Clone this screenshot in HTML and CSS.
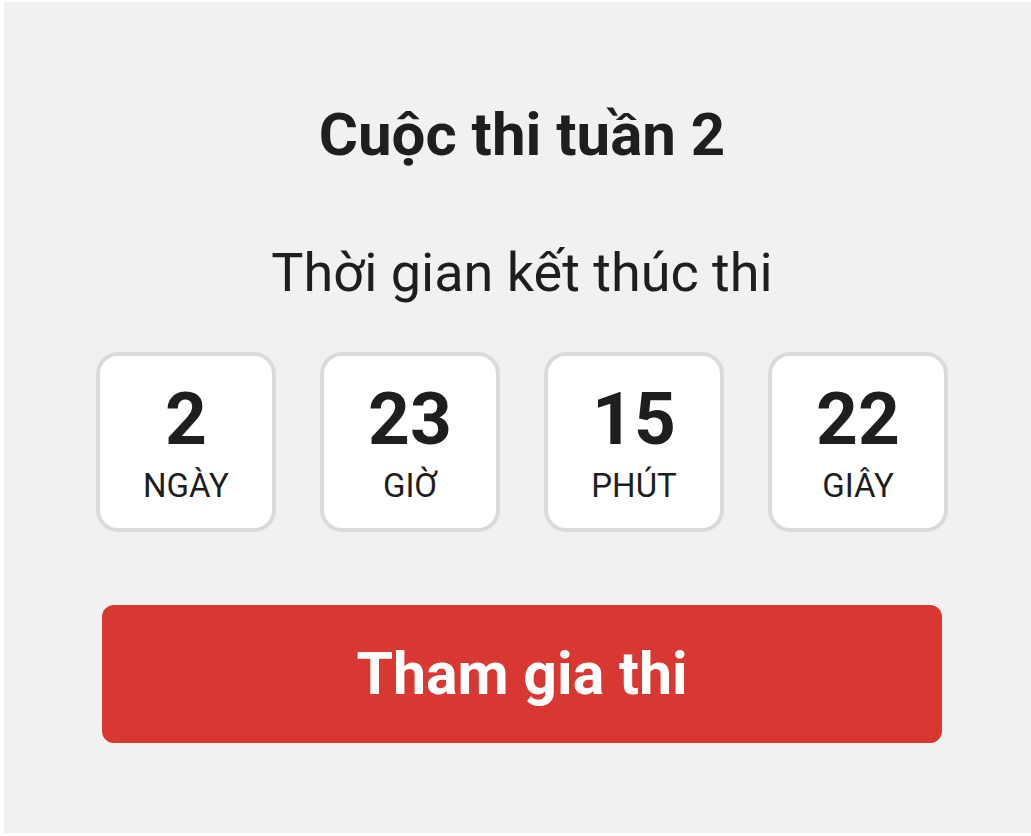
FILE: index.html
```html
<!DOCTYPE html>
<html lang="vi">
<head>
    <meta charset="UTF-8">
    <meta name="viewport" content="width=device-width, initial-scale=1.0">
    <title>Cuộc thi tuần 2</title>
    <link rel="stylesheet" href="styles.css">
</head>
<body>
    <div class="panel">
        <h1 class="titulo">Cuộc thi tuần 2</h1>
        <p class="subtitulo">Thời gian kết thúc thi</p>
        <div class="cuenta-atras">
            <div class="caja">
                <div class="numero" id="dias">2</div>
                <div class="etiqueta">NGÀY</div>
            </div>
            <div class="caja">
                <div class="numero" id="horas">23</div>
                <div class="etiqueta">GIỜ</div>
            </div>
            <div class="caja">
                <div class="numero" id="minutos">15</div>
                <div class="etiqueta">PHÚT</div>
            </div>
            <div class="caja">
                <div class="numero" id="segundos">22</div>
                <div class="etiqueta">GIÂY</div>
            </div>
        </div>
        <button class="boton-rojo">Tham gia thi</button>
    </div>
</body>
</html>
```

FILE: styles.css
```css
html, body {
    margin: 0;
    padding: 0;
    background-color: white;
    overflow: hidden;
}

body {
    padding: 2px 0 3px 4px;
    font-family: Roboto, "Noto Sans", Arial, sans-serif;
    color: #1e1e1e;
}

/* Fondo gris, un poco más ancho que la ventana */
.panel {
    width: 1036px;
    height: 831px;
    box-sizing: border-box;
    background-color: #f1f1f1;
    display: flex;
    flex-direction: column;
    align-items: center;
    padding-top: 96px;
}

.titulo {
    margin: 0;
    font-size: 60px;
    line-height: 74px;
    font-weight: 700;
}

.subtitulo {
    margin: 69px 0 0 0;
    font-size: 54px;
    line-height: 64px;
    font-weight: 400;
}

.cuenta-atras {
    display: flex;
    gap: 44px;
    margin-top: 47px;
}

.caja {
    width: 180px;
    height: 180px;
    box-sizing: border-box;
    border: 4px solid #dadada;
    border-radius: 22px;
    background: white;
    display: flex;
    flex-direction: column;
    align-items: center;
    padding-top: 23px;
}

.numero {
    font-size: 73px;
    line-height: 80px;
    font-weight: 700;
}

.etiqueta {
    margin-top: 7px;
    font-size: 33px;
    line-height: 40px;
}

.boton-rojo {
    margin-top: 73px;
    width: 840px;
    height: 138px;
    border: none;
    border-radius: 12px;
    background-color: #d83732;
    color: white;
    font-family: Roboto, "Noto Sans", Arial, sans-serif;
    font-size: 59px;
    line-height: 138px;
    font-weight: 700;
    padding: 0;
    cursor: pointer;
}
```
